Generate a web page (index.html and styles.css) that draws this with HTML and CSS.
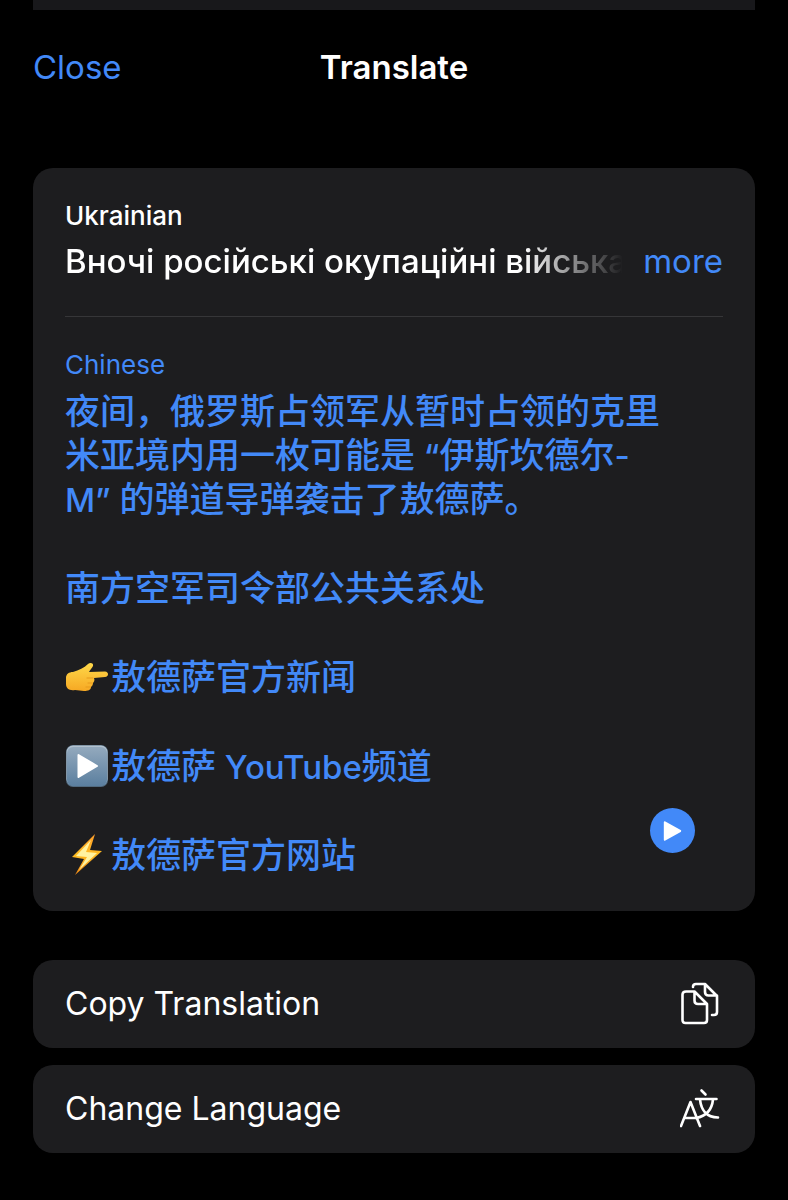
FILE: index.html
```html
<!DOCTYPE html>
<html lang="en">
<head>
  <meta charset="UTF-8" />
  <meta name="viewport" content="width=device-width, initial-scale=1" />
  <title>Translate</title>
  <link rel="stylesheet" href="styles.css">
</head>
<body>

  <div class="previous-sheet"></div>

  <!-- Title bar -->
  <header class="title-bar">
    <button type="button" class="close-btn">Close</button>
    <h1>Translate</h1>
  </header>

  <main>

    <!-- Source and translated text -->
    <section class="card translation-card">
      <div class="source">
        <h2>Ukrainian</h2>
        <div class="source-row">
          <p class="source-text" lang="uk">Вночі російські окупаційні війська</p>
          <button type="button" class="more-btn">more</button>
        </div>
      </div>

      <div class="target">
        <h2>Chinese</h2>
        <div class="target-text" lang="zh-CN">
          <p>夜间，俄罗斯占领军从暂时占领的克里米亚境内用一枚可能是<span class="latin"> “</span>伊斯坎德尔<span class="latin">-M” </span>的弹道导弹袭击了敖德萨。</p>
          <p>南方空军司令部公共关系处</p>
          <p class="link-line">
            <svg class="emoji" viewBox="0 0 44 44" aria-hidden="true">
              <defs>
                <linearGradient id="hand" x1="0" y1="0" x2="0" y2="1">
                  <stop offset="0" stop-color="#ffd94a" />
                  <stop offset="1" stop-color="#f6a823" />
                </linearGradient>
              </defs>
              <path fill="url(#hand)" d="M1 23C1 19 4 17 8 17C14 15 19 13 23 9C25 7 29 8 28 11C27 13 25 15 24 17L40 16.500C44 17 44 21.500 40 22L29 23C30 25 29 27 28 28C28 30 27 31 26 32C26 35 23 36 19 36L10 35C4 36 1 33 1 29Z" />
              <path fill="none" stroke="#e79a1c" stroke-linecap="round" d="M28 23L22 23M27 28L23 28M25 32L21 32" />
            </svg>
            <span>敖德萨官方新闻</span>
          </p>
          <p class="link-line">
            <svg class="emoji" viewBox="0 0 44 44" aria-hidden="true">
              <defs>
                <linearGradient id="tile" x1="0" y1="0" x2="0" y2="1">
                  <stop offset="0" stop-color="#93a9bd" />
                  <stop offset="1" stop-color="#5b7f9f" />
                </linearGradient>
              </defs>
              <rect x="1" y="1" width="42" height="42" rx="7" fill="#526b80" />
              <rect x="1.5" y="1.5" width="41" height="40" rx="6.5" fill="#b2c1ce" />
              <rect x="2" y="3" width="40" height="39" rx="6" fill="url(#tile)" />
              <path fill="#fff" stroke="#fff" stroke-width="2" stroke-linejoin="round" d="M13.500 11L32 22L13.500 33Z" />
            </svg>
            <span>敖德萨<span class="latin"> YouTube</span>频道</span>
          </p>
          <p class="link-line">
            <svg class="emoji" viewBox="0 0 44 44" aria-hidden="true">
              <defs>
                <linearGradient id="bolt" x1="0" y1="0" x2="0" y2="1">
                  <stop offset="0" stop-color="#ff9d2b" />
                  <stop offset="0.5" stop-color="#ffbd22" />
                  <stop offset="1" stop-color="#f38a16" />
                </linearGradient>
              </defs>
              <path fill="url(#bolt)" d="M30 1L7 24L19 26L10 42L37 18L25 17Z" />
              <path fill="#fff3a0" d="M26 7L11 23L22 24L14 37L32 20L21 19Z" />
            </svg>
            <span>敖德萨官方网站</span>
          </p>
        </div>
      </div>

      <button type="button" class="play-btn" aria-label="Play translation">
        <svg viewBox="0 0 44 44" aria-hidden="true">
          <path fill="#fff" stroke="#fff" stroke-width="2" stroke-linejoin="round" d="M14.500 14L29.500 22.500L14.500 31Z" />
        </svg>
      </button>
    </section>

    <!-- Actions -->
    <div class="actions">
      <button type="button" class="card action">
        <span>Copy Translation</span>
        <svg viewBox="0 0 40 44" aria-hidden="true">
          <g fill="none" stroke="#fff" stroke-width="2.6" stroke-linecap="round" stroke-linejoin="round">
            <path d="M6 9.500H14.500L27 22V38Q27 41 24 41H5.500Q2.500 41 2.500 38V12.500Q2.500 9.500 6 9.500ZM14.500 9.500V18.500Q14.500 22 18 22H27" />
            <path d="M13 5Q13 2 16 2H25L37 14V30Q37 33 34 33H32M25 2V10Q25 13.500 28.500 13.500H37" />
          </g>
        </svg>
      </button>
      <button type="button" class="card action">
        <span>Change Language</span>
        <svg viewBox="0 0 40 44" aria-hidden="true">
          <g fill="none" stroke="#fff" stroke-width="2.6" stroke-linecap="round" stroke-linejoin="round">
            <path d="M1 39L10.500 15L20 39M5 31H16" />
            <path d="M21.500 3.500L25.500 7.500M16 12H36.500M20 12.500C21 22 26 30.500 38 30.500M33 12.500C32 22 27 29 16 31" />
          </g>
        </svg>
      </button>
    </div>

  </main>

</body>
</html>
```
FILE: styles.css
```css
* {
  box-sizing: border-box;
}
body {
  margin: 0;
  padding: 0 33px 46px;
  background-color: #000;
  color: #fff;
  font-family: Inter, "Noto Sans CJK SC", sans-serif;
  font-size: 33px;
  line-height: 44px;
}
h1, h2, p {
  margin: 0;
}
button {
  padding: 0;
  border: 0;
  background: none;
  color: inherit;
  font: inherit;
  cursor: pointer;
}
.previous-sheet {
  height: 10px;
  background-color: #18181b;
}
.title-bar {
  display: grid;
  grid-template-columns: 1fr auto 1fr;
  padding: 35px 0 79px;
}
.title-bar h1 {
  font-size: 33px;
  font-weight: 600;
}
.close-btn {
  justify-self: start;
}
.close-btn, .more-btn, .target {
  color: #4289f8;
}
.card {
  background-color: #1d1d1f;
  border-radius: 20px;
}
.translation-card {
  position: relative;
  padding: 32px 32px 34px;
}
h2 {
  font-size: 26px;
  font-weight: 500;
  line-height: 32px;
}
.source {
  padding-bottom: 33px;
  border-bottom: 1px solid #363638;
}
.source-row {
  display: flex;
  gap: 20px;
  padding-top: 7px;
}
/* long source text fades out before the "more" button */
.source-text {
  flex: 1;
  min-width: 0;
  overflow: hidden;
  white-space: nowrap;
  font-weight: 500;
  mask-image: linear-gradient(to right, #000 calc(100% - 100px), transparent);
}
.target {
  padding-top: 32px;
  font-weight: 500;
}
.target h2 {
  font-weight: 400;
}
.target-text {
  display: grid;
  gap: 45px;
  max-width: 604px;
  padding-top: 8px;
  font-size: 35px;
}
.latin {
  font-size: 33px;
  line-height: 1;
}
.link-line {
  display: flex;
  gap: 2px;
}
.emoji {
  flex: none;
  width: 44px;
  height: 44px;
}
.play-btn {
  position: absolute;
  right: 60px;
  bottom: 58px;
  width: 45px;
  height: 45px;
  border-radius: 50%;
  background-color: #4289f8;
}
.play-btn svg {
  display: block;
}
.actions {
  display: grid;
  gap: 17px;
  margin-top: 49px;
}
.action {
  display: flex;
  align-items: center;
  justify-content: space-between;
  padding: 22px 35px 22px 32px;
  font-size: 32px;
  text-align: left;
}
.action svg {
  width: 40px;
  height: 44px;
}
```
